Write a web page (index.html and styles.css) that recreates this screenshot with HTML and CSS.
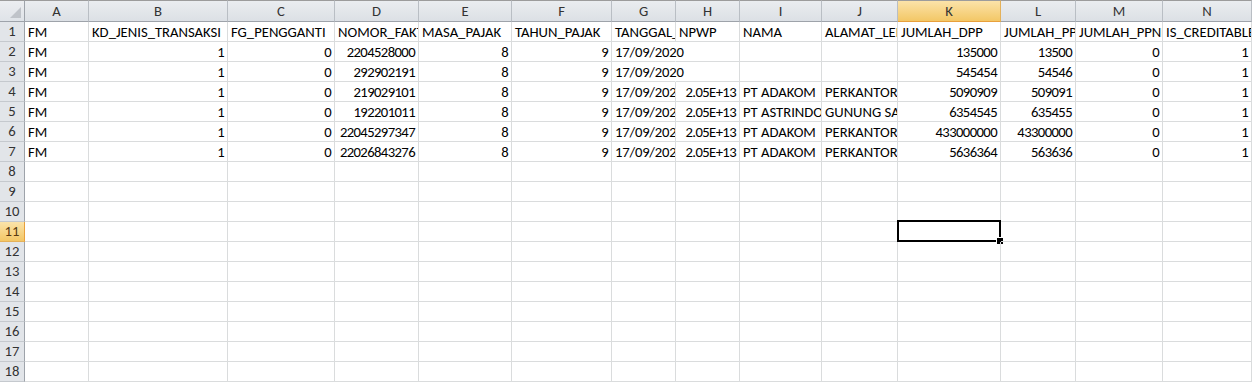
FILE: index.html
```html
<!DOCTYPE html>
<html lang="id">
<head>
<meta charset="UTF-8" />
<meta name="viewport" content="width=device-width, initial-scale=1" />
<link rel="stylesheet" href="styles.css">
</head>
<body>

<div id="sheet" class="sheet" role="grid"></div>

<script>
  const sheet = document.getElementById('sheet');
  const letters = ['A', 'B', 'C', 'D', 'E', 'F', 'G', 'H', 'I', 'J', 'K', 'L', 'M', 'N'];
  const selCol = 10;
  const selRow = 11;
  const totalRows = 18;

  const data = [
    ['FM', 'KD_JENIS_TRANSAKSI', 'FG_PENGGANTI', 'NOMOR_FAKTUR', 'MASA_PAJAK', 'TAHUN_PAJAK', 'TANGGAL_FAKTUR', 'NPWP', 'NAMA', 'ALAMAT_LENGKAP', 'JUMLAH_DPP', 'JUMLAH_PPN', 'JUMLAH_PPNBM', 'IS_CREDITABLE'],
    ['FM', '1', '0', '2204528000', '8', '9', '17/09/2020', '', '', '', '135000', '13500', '0', '1'],
    ['FM', '1', '0', '292902191', '8', '9', '17/09/2020', '', '', '', '545454', '54546', '0', '1'],
    ['FM', '1', '0', '219029101', '8', '9', '17/09/2020', '2.05E+13', 'PT ADAKOM', 'PERKANTORAN', '5090909', '509091', '0', '1'],
    ['FM', '1', '0', '192201011', '8', '9', '17/09/2020', '2.05E+13', 'PT ASTRINDO', 'GUNUNG SAHARI', '6354545', '635455', '0', '1'],
    ['FM', '1', '0', '22045297347', '8', '9', '17/09/2020', '2.05E+13', 'PT ADAKOM', 'PERKANTORAN', '433000000', '43300000', '0', '1'],
    ['FM', '1', '0', '22026843276', '8', '9', '17/09/2020', '2.05E+13', 'PT ADAKOM', 'PERKANTORAN', '5636364', '563636', '0', '1']
  ];

  function add(className, text) {
    const d = document.createElement('div');
    d.className = className;
    d.textContent = text || '';
    sheet.appendChild(d);
    return d;
  }

  // column headers
  add('corner');
  letters.forEach((l, i) => {
    add('col-head' + (i === selCol ? ' on' : ''), l);
  });

  // rows
  for (let r = 1; r <= totalRows; r++) {
    add('row-head' + (r === selRow ? ' on' : ''), r);
    const row = data[r - 1] || [];
    letters.forEach((l, c) => {
      const v = row[c] || '';
      const next = row[c + 1];
      let cls = 'cell';
      const isNum = r > 1 && /^[0-9.E+]+$/.test(v);
      if (isNum) cls += ' num';
      else if (v && c < letters.length - 1 && !next) cls += ' spill';
      if (v.includes('/')) cls += ' date';
      if (r === selRow && c === selCol) cls += ' sel';
      add(cls, v);
    });
  }
</script>

</body>
</html>
```

FILE: styles.css
```css
body {
  margin: 0;
  background: #fff;
  font-family: Carlito, Calibri, Lato, "Liberation Sans", sans-serif;
  font-size: 14.67px;
  color: #000;
  overflow: hidden;
}

.sheet {
  display: grid;
  grid-template-columns: 25px 64px 139px 107px 84px 93px 100px 64px 64px 82px 76px 103px 75px 87px 89px;
  grid-template-rows: 22px repeat(18, 20px);
  width: 1252px;
  overflow: hidden;
}

.corner {
  position: relative;
  box-sizing: border-box;
  background: linear-gradient(#eceef1, #dfe3e8);
  border-top: 1px solid #9c9c9c;
  border-right: 1px solid #9ea3aa;
  border-bottom: 1px solid #9ea3aa;
}

.corner::after {
  content: "";
  position: absolute;
  right: 3px;
  bottom: 3px;
  width: 0;
  height: 0;
  border-left: 11px solid transparent;
  border-bottom: 11px solid #bfc3c9;
}

.col-head {
  box-sizing: border-box;
  background: linear-gradient(#eaedf0, #dce0e5);
  border-top: 1px solid #9c9c9c;
  border-right: 1px solid #b9bec4;
  border-bottom: 1px solid #9ea3aa;
  text-align: center;
  line-height: 20px;
  color: #333;
}

.row-head {
  box-sizing: border-box;
  background: #e2e5e9;
  border-right: 1px solid #9ea3aa;
  border-bottom: 1px solid #c5c9ce;
  text-align: center;
  line-height: 19px;
  color: #333;
}

.col-head.on {
  background: linear-gradient(#fbe3a9, #f3c766);
  border-bottom-color: #e8a03c;
  border-right-color: #e4b15a;
}

.row-head.on {
  background: linear-gradient(#fbe3a9, #f3c766);
  border-right-color: #e8a03c;
  border-bottom-color: #e4b15a;
  color: #5a3a10;
}

.cell {
  position: relative;
  box-sizing: border-box;
  border-right: 1px solid #dadcdd;
  border-bottom: 1px solid #dadcdd;
  padding: 0 3px;
  white-space: nowrap;
  overflow: hidden;
  line-height: 20px;
}

.cell.num {
  text-align: right;
  letter-spacing: -0.6px;
}

.cell.date {
  letter-spacing: -0.2px;
}

.cell.spill {
  overflow: visible;
  border-right-color: transparent;
}

.cell.sel {
  overflow: visible;
}

.cell.sel::before {
  content: "";
  position: absolute;
  left: -1px;
  top: -2px;
  right: -1px;
  bottom: -1px;
  border: 2px solid #000;
}

.cell.sel::after {
  content: "";
  position: absolute;
  right: -4px;
  bottom: -4px;
  width: 6px;
  height: 6px;
  background: #000;
  border: 1px solid #fff;
}
```
